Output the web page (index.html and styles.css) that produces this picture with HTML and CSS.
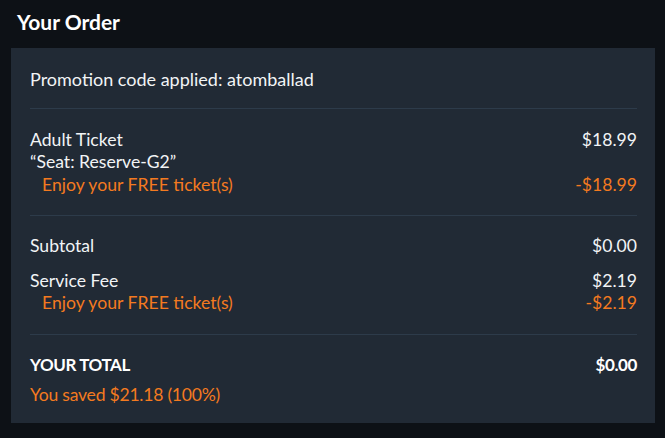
FILE: index.html
```html
<!DOCTYPE html>
<html lang="en">
<head>
<meta charset="utf-8">
<title>Your Order</title>
<link rel="stylesheet" href="styles.css">
</head>
<body>
<h1 class="title">Your Order</h1>
<section class="panel">
  <div class="section promo">Promotion code applied: atomballad</div>
  <div class="section items">
    <div class="row"><span>Adult Ticket</span><span>$18.99</span></div>
    <div class="row"><span>&ldquo;Seat: Reserve-G2&rdquo;</span></div>
    <div class="row discount"><span>Enjoy your FREE ticket(s)</span><span>-$18.99</span></div>
  </div>
  <div class="section fees">
    <div class="row"><span>Subtotal</span><span>$0.00</span></div>
    <div class="group">
      <div class="row"><span>Service Fee</span><span>$2.19</span></div>
      <div class="row discount"><span>Enjoy your FREE ticket(s)</span><span>-$2.19</span></div>
    </div>
  </div>
  <div class="section total">
    <div class="row strong"><span>YOUR TOTAL</span><span>$0.00</span></div>
    <div class="saved">You saved $21.18 (100%)</div>
  </div>
</section>
</body>
</html>
```
FILE: styles.css
```css
* { box-sizing: border-box; }
html, body { margin: 0; padding: 0; }
body {
  background: #0d1116;
  color: #f2f4f6;
  font-family: Lato, "Open Sans", sans-serif;
  font-size: 17.6px;
  line-height: 22.5px;
  width: 665px;
  height: 438px;
  overflow: hidden;
}
.title {
  margin: 0;
  padding: 7px 0 0 17px;
  height: 48px;
  font-size: 21px;
  line-height: 30px;
  font-weight: 700;
  color: #ffffff;
}
.panel {
  margin: 0 10px 0 11px;
  background: #212a35;
  padding: 0 18px 0 19px;
  height: 375px;
}
.section {
  border-bottom: 1px solid #2d3b4a;
}
.section:last-child { border-bottom: none; }
.promo { padding: 20px 0 17px; font-size: 18px; }
.items { padding: 20px 0 19px; }
.fees { padding: 19px 0 19px; display: flex; flex-direction: column; gap: 12px; }
.total { padding: 19px 0 0; display: flex; flex-direction: column; gap: 8px; }
.row { display: flex; justify-content: space-between; }
.discount { color: #f47a20; padding-left: 12px; }
.strong { font-weight: 700; color: #ffffff; font-size: 17px; letter-spacing: -0.4px; }
.saved { color: #f47a20; letter-spacing: -0.25px; }
```
